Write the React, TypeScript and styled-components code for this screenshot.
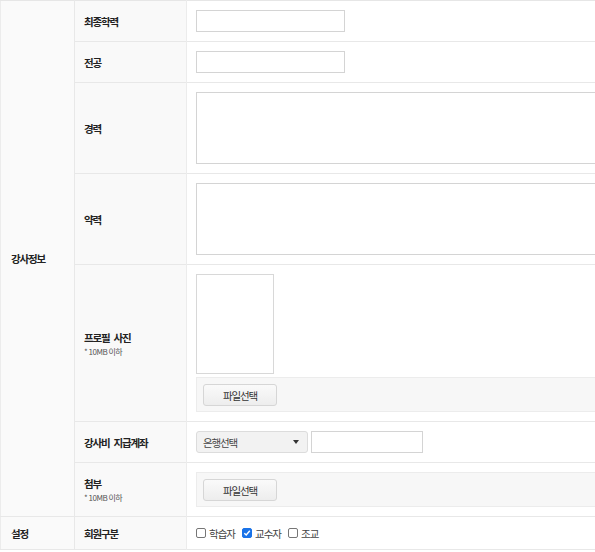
import React from "react";
import styled, { createGlobalStyle } from "styled-components";

const GlobalStyle = createGlobalStyle`
  html, body {
    margin: 0;
    padding: 0;
    background: #fff;
    overflow: hidden;
  }
  body {
    font-family: "Noto Sans CJK KR", "Noto Sans", sans-serif;
    color: #333;
  }
`;

const Page = styled.div`
  width: 740px;
`;

const FormTable = styled.table`
  width: 740px;
  border-collapse: collapse;
  table-layout: fixed;
  border-top: 1px solid #e6e6e6;
  border-left: 1px solid #ececec;
`;

const Row = styled.tr`
  border-bottom: 1px solid #e8e8e8;
`;

const SectionCell = styled.th`
  background: #fafafa;
  border-right: 1px solid #e8e8e8;
  border-bottom: 1px solid #e8e8e8;
  padding: 0 10px;
  text-align: left;
  font-size: 10.5px;
  font-weight: 700;
  letter-spacing: -1.2px;
  color: #222;
`;

const LabelCell = styled.th`
  background: #f9f9f9;
  border-right: 1px solid #ececec;
  padding: 0 9px;
  text-align: left;
  vertical-align: middle;
  font-size: 10.5px;
  font-weight: 700;
  letter-spacing: -1.2px;
  word-spacing: 3px;
  color: #222;
`;

const ValueCell = styled.td<{ $height?: number }>`
  padding: 9px;
  vertical-align: middle;
  ${(p) => (p.$height ? `height: ${p.$height}px; padding-top: 0; padding-bottom: 0;` : "")}
`;

const Note = styled.span`
  display: block;
  margin-top: 1px;
  font-size: 8px;
  font-weight: 400;
  letter-spacing: -0.5px;
  word-spacing: 0;
  color: #555;
`;

const TextInput = styled.input<{ $width: number }>`
  display: block;
  box-sizing: border-box;
  width: ${(p) => p.$width}px;
  height: 22px;
  margin: 0;
  border: 1px solid #d4d4d4;
  background: #fff;
  outline: none;
`;

const TextArea = styled.textarea`
  display: block;
  box-sizing: border-box;
  width: 100%;
  height: 72px;
  margin: 0;
  border: 1px solid #d4d4d4;
  resize: none;
  outline: none;
`;

const PhotoBox = styled.div`
  box-sizing: border-box;
  width: 78px;
  height: 100px;
  border: 1px solid #d8d8d8;
  background: #fff;
`;

const FileBar = styled.div<{ $gap?: number }>`
  box-sizing: border-box;
  display: flex;
  align-items: flex-start;
  height: 35px;
  margin-top: ${(p) => p.$gap ?? 0}px;
  padding: 6px;
  background: #f7f7f7;
  border: 1px solid #ececec;
`;

const FileButton = styled.button`
  box-sizing: border-box;
  width: 74px;
  height: 22px;
  margin: 0;
  padding: 0;
  border: 1px solid #d6d6d6;
  border-radius: 3px;
  background: linear-gradient(#fafafa, #ededed);
  font-family: inherit;
  font-size: 10.5px;
  letter-spacing: -1.2px;
  color: #333;
`;

const AccountLine = styled.div`
  display: flex;
  align-items: center;
  gap: 3px;
`;

const SelectBox = styled.div`
  box-sizing: border-box;
  display: flex;
  align-items: center;
  justify-content: space-between;
  width: 112px;
  height: 22px;
  padding: 0 8px 0 6px;
  border: 1px solid #dcdcdc;
  border-radius: 3px;
  background: #f2f2f2;
  font-size: 10.5px;
  letter-spacing: -1.2px;
  color: #444;
`;

const CheckGroup = styled.div`
  display: flex;
  align-items: center;
  font-size: 10.5px;
  letter-spacing: -1px;
  color: #444;
`;

const CheckItem = styled.label`
  display: flex;
  align-items: center;
  gap: 3px;
  margin-right: 7px;
`;

const Box = styled.span<{ $checked?: boolean }>`
  box-sizing: border-box;
  display: inline-flex;
  align-items: center;
  justify-content: center;
  width: 10px;
  height: 10px;
  border-radius: 2px;
  border: 1px solid ${(p) => (p.$checked ? "#1a73e8" : "#767676")};
  background: ${(p) => (p.$checked ? "#1a73e8" : "#fff")};
`;

function Check({ label, checked }: { label: string; checked?: boolean }) {
  return (
    <CheckItem>
      <Box $checked={checked}>
        {checked && (
          <svg width="8" height="8" viewBox="0 0 8 8">
            <path d="M1.3 4.2 L3.2 6 L6.8 1.8" fill="none" stroke="#fff" strokeWidth="1.4" />
          </svg>
        )}
      </Box>
      {label}
    </CheckItem>
  );
}

function Arrow() {
  return (
    <svg width="6" height="4" viewBox="0 0 6 4">
      <path d="M0 0 H6 L3 4 Z" fill="#333" />
    </svg>
  );
}

export default function App() {
  return (
    <Page>
      <GlobalStyle />
      <FormTable>
        <colgroup>
          <col style={{ width: 74 }} />
          <col style={{ width: 112 }} />
          <col />
        </colgroup>
        <tbody>
          <Row>
            <SectionCell rowSpan={7}>강사정보</SectionCell>
            <LabelCell>최종학력</LabelCell>
            <ValueCell>
              <TextInput $width={149} />
            </ValueCell>
          </Row>
          <Row>
            <LabelCell>전공</LabelCell>
            <ValueCell>
              <TextInput $width={149} />
            </ValueCell>
          </Row>
          <Row>
            <LabelCell>경력</LabelCell>
            <ValueCell>
              <TextArea />
            </ValueCell>
          </Row>
          <Row>
            <LabelCell>약력</LabelCell>
            <ValueCell>
              <TextArea />
            </ValueCell>
          </Row>
          <Row>
            <LabelCell>
              프로필 사진
              <Note>* 10MB 이하</Note>
            </LabelCell>
            <ValueCell>
              <PhotoBox />
              <FileBar $gap={3}>
                <FileButton>파일선택</FileButton>
              </FileBar>
            </ValueCell>
          </Row>
          <Row>
            <LabelCell>강사비 지급계좌</LabelCell>
            <ValueCell>
              <AccountLine>
                <SelectBox>
                  은행선택
                  <Arrow />
                </SelectBox>
                <TextInput $width={112} />
              </AccountLine>
            </ValueCell>
          </Row>
          <Row>
            <LabelCell>
              첨부
              <Note>* 10MB 이하</Note>
            </LabelCell>
            <ValueCell>
              <FileBar>
                <FileButton>파일선택</FileButton>
              </FileBar>
            </ValueCell>
          </Row>
          <Row>
            <SectionCell>설정</SectionCell>
            <LabelCell>회원구분</LabelCell>
            <ValueCell $height={32}>
              <CheckGroup>
                <Check label="학습자" />
                <Check label="교수자" checked />
                <Check label="조교" />
              </CheckGroup>
            </ValueCell>
          </Row>
        </tbody>
      </FormTable>
    </Page>
  );
}
